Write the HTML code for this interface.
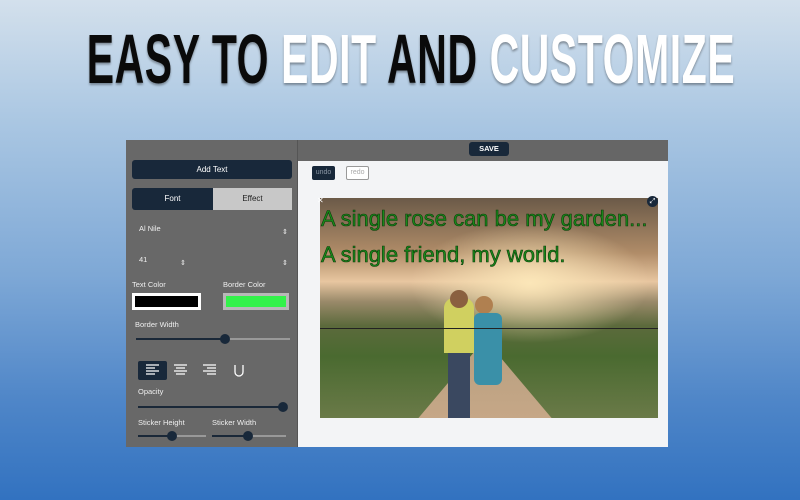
<!DOCTYPE html>
<html><head><style>
*{margin:0;padding:0;box-sizing:border-box}
body{width:800px;height:500px;overflow:hidden;position:relative;font-family:"Liberation Sans",sans-serif;
background:linear-gradient(#d3e0ec 0%,#a9c6e2 25%,#7ea8d6 55%,#4f86c8 80%,#3272c0 100%);}
.title{position:absolute;left:411px;top:21px;white-space:nowrap;font-weight:bold;font-size:70px;line-height:76px;letter-spacing:1px;transform:translateX(-50%) scaleX(0.585);color:#0a0a0a;text-shadow:0 2px 3px rgba(0,0,0,.35)}
.title span{color:#fff}
.left{position:absolute;left:126px;top:140px;width:172px;height:307px;background:#686868;border-right:1px solid #555}
.right{position:absolute;left:298px;top:140px;width:370px;height:307px;background:#f3f4f6}
.bar{position:absolute;left:298px;top:140px;width:370px;height:21px;background:#666}
.dark{background:#18283a;color:#fff}
.lbl{position:absolute;color:#eee;font-size:7.5px}
.sl{position:absolute;height:2px;background:#999}
.sl i{position:absolute;left:0;top:0;height:2px;background:#1a2838}
.sl b{position:absolute;top:-4px;width:10px;height:10px;border-radius:50%;background:#18283a}
.cap{position:absolute;left:1px;font-size:22px;color:#1a8a1a;-webkit-text-stroke:.6px #0a3a0a;white-space:nowrap}
</style></head><body>
<div class="title">EASY TO <span>EDIT</span> AND <span>CUSTOMIZE</span></div>
<div class="left">
 <div class="dark" style="position:absolute;left:6px;top:20px;width:160px;height:19px;border-radius:3px;font-size:8px;text-align:center;line-height:19px">Add Text</div>
 <div class="dark" style="position:absolute;left:6px;top:48px;width:81px;height:22px;border-radius:3px 0 0 3px;font-size:8px;text-align:center;line-height:22px">Font</div>
 <div style="position:absolute;left:87px;top:48px;width:79px;height:22px;background:#c8c8c8;color:#222;font-size:8px;text-align:center;line-height:22px">Effect</div>
 <div class="lbl" style="left:13px;top:84px">Al Nile</div>
 <div class="lbl" style="left:156px;top:88px;font-size:7px">⇕</div>
 <div class="lbl" style="left:13px;top:115px">41</div>
 <div class="lbl" style="left:54px;top:119px;font-size:7px">⇕</div>
 <div class="lbl" style="left:156px;top:119px;font-size:7px">⇕</div>
 <div class="lbl" style="left:6px;top:140px">Text Color</div>
 <div class="lbl" style="left:97px;top:140px">Border Color</div>
 <div style="position:absolute;left:6px;top:153px;width:69px;height:17px;background:#000;border:3px solid #fff"></div>
 <div style="position:absolute;left:97px;top:153px;width:66px;height:17px;background:#33f24a;border:3px solid #b8b8b8"></div>
 <div class="lbl" style="left:9px;top:180px">Border Width</div>
 <div class="sl" style="left:10px;top:198px;width:154px"><i style="width:85px"></i><b style="left:84px"></b></div>
 <div class="dark" style="position:absolute;left:12px;top:221px;width:29px;height:19px;border-radius:2px"></div>
 <svg style="position:absolute;left:0;top:0" width="172" height="307" stroke="#fff" stroke-width="1.3">
  <path d="M20 225h13M20 228h9M20 231h13M20 234h9"/>
  <path d="M48 225h13M50 228h9M48 231h13M50 234h9"/>
  <path d="M77 225h13M81 228h9M77 231h13M81 234h9"/>
  <path d="M109 225v7a4 4 0 0 0 8 0v-7" fill="none"/>
 </svg>
 <div class="lbl" style="left:12px;top:247px">Opacity</div>
 <div class="sl" style="left:12px;top:266px;width:150px"><i style="width:145px"></i><b style="left:140px"></b></div>
 <div class="lbl" style="left:12px;top:278px">Sticker Height</div>
 <div class="lbl" style="left:86px;top:278px">Sticker Width</div>
 <div class="sl" style="left:12px;top:295px;width:68px"><i style="width:34px"></i><b style="left:29px"></b></div>
 <div class="sl" style="left:86px;top:295px;width:74px"><i style="width:37px"></i><b style="left:31px"></b></div>
</div>
<div class="right"></div>
<div class="bar"></div>
<div class="dark" style="position:absolute;left:469px;top:142px;width:40px;height:14px;border-radius:3px;font-size:7.5px;font-weight:bold;text-align:center;line-height:14px">SAVE</div>
<div class="dark" style="position:absolute;left:312px;top:166px;width:23px;height:14px;border-radius:2px;font-size:7px;color:#8a96a4;text-align:center;line-height:14px">undo</div>
<div style="position:absolute;left:346px;top:166px;width:23px;height:14px;border:1px solid #999;border-radius:2px;font-size:7px;color:#aaa;text-align:center;line-height:12px;background:#fff">redo</div>
<div style="position:absolute;left:320px;top:198px;width:338px;height:220px;overflow:hidden;
background:radial-gradient(ellipse 120px 60px at 210px 85px,#fbe6b8,rgba(240,200,140,0) 100%),linear-gradient(#6b5a48 0%,#b08c68 25%,#e8c6a0 38%,#9a8a6a 47%,#5c6a3c 58%,#4a6a30 72%,#6a7a48 100%)">
 <div style="position:absolute;left:90px;top:150px;width:150px;height:80px;background:linear-gradient(#b8a080,#c8a888);clip-path:polygon(45% 0,55% 0,100% 100%,0 100%)"></div>
 <div style="position:absolute;left:124px;top:100px;width:30px;height:55px;background:#d0d060;border-radius:10px 10px 0 0"></div>
 <div style="position:absolute;left:130px;top:92px;width:18px;height:18px;border-radius:50%;background:#8a6040"></div>
 <div style="position:absolute;left:128px;top:155px;width:22px;height:65px;background:#3a4860"></div>
 <div style="position:absolute;left:155px;top:98px;width:18px;height:18px;border-radius:50%;background:#b08050"></div>
 <div style="position:absolute;left:154px;top:115px;width:28px;height:72px;background:#3a90a8;border-radius:6px"></div>
 <div style="position:absolute;left:0;top:130px;width:338px;height:1px;background:#222"></div>
 <div class="cap" style="top:8px">A single rose can be my garden...</div>
 <div class="cap" style="top:44px">A single friend, my world.</div>
</div>
<div style="position:absolute;left:647px;top:196px;width:11px;height:11px;border-radius:50%;background:#18283a;color:#fff;font-size:7px;text-align:center;line-height:11px">⤢</div>
<div style="position:absolute;left:317px;top:196px;color:#fff;font-size:8px">✕</div>
</body></html>
